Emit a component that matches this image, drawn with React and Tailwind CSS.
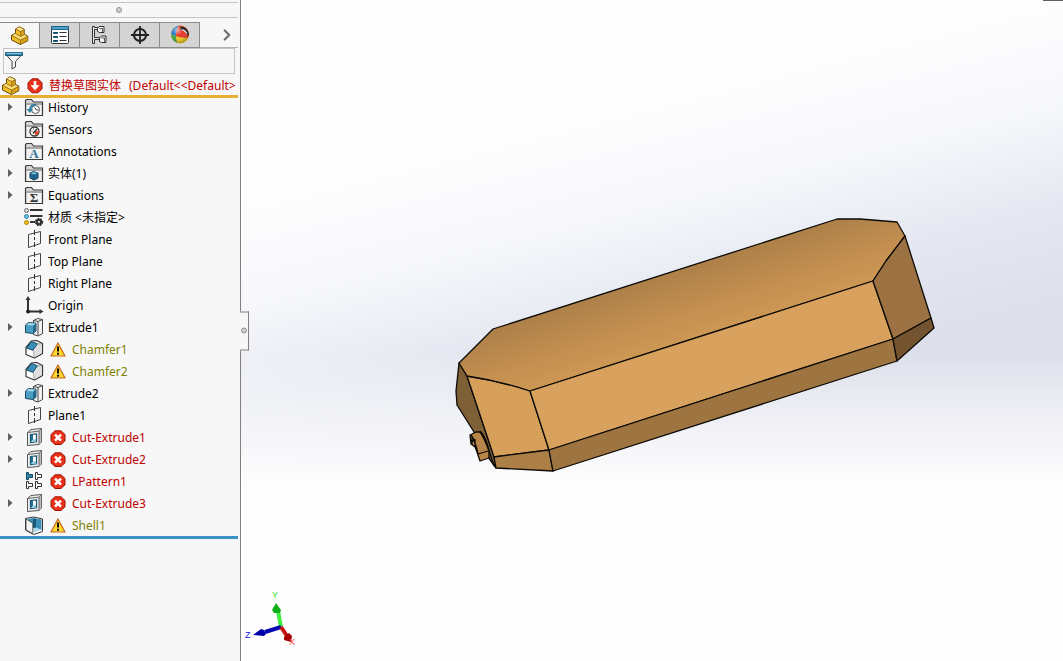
import React, { useState } from "react";
import { ChevronRight } from "lucide-react";

// ---------- Icons ----------

const Icon = ({ size = 20, children }) => (
  <svg
    width={size}
    height={size}
    viewBox={`0 0 ${size} ${size}`}
    className="shrink-0"
    aria-hidden="true"
  >
    {children}
  </svg>
);

const PartIcon = () => (
  <Icon>
    <path
      d="M5.5 3 9 .8l5.2 2.4v5l3.6 2v4.6l-7.4 3.7-8.9-4.6V9.2l4-2z"
      fill="#efbd2a"
      stroke="#6b4a08"
      strokeLinejoin="round"
    />
    <path d="M6 3.1 9 1.3l4.8 2.2-3.3 1.8z" fill="#ffe88f" />
    <path d="m2.2 9.3 3.5-1.5 4.6 2.7 3.5-1.8 3.2 1.7-6.7 3.4z" fill="#fbe07a" />
    <path d="m11 5.7 2.7-1.4v4l-2.7 1.5z" fill="#d79f18" />
    <path d="m10.8 14.3 6.500-3.200v3.500l-6.500 3.300z" fill="#d79f18" />
    <path
      d="m5.8 3.2 4.900 2.300v5L5.700 7.800M10.700 5.500l3.300-1.700M2 9.500l8.400 4.600v4.200M10.400 14.100l7.200-3.600M10.700 10.500l3.300-1.800"
      fill="none"
      stroke="#8a6210"
      strokeWidth="0.8"
    />
  </Icon>
);

const PropertyIcon = () => (
  <Icon>
    <rect x="1.5" y="1.500" width="17" height="17" rx="1" fill="#fff" stroke="#333" />
    <path d="M1 1h18v4H1z" fill="#1f6288" />
    <path d="M2 2h16v2H2z" fill="#4ba3c9" />
    <path d="M3 8h5M3 12h5M3 16h5" stroke="#246a90" strokeWidth="2" />
    <path d="M4 7.500h3M4 11.500h3M4 15.500h3" stroke="#1b3f52" />
    <path d="M9.500 7.500h7M9.500 11.500h7M9.500 15.500h7" stroke="#333" />
  </Icon>
);

const ConfigIcon = () => (
  <Icon>
    <path d="M2.500 1.500h2v1h4v2h-4v8h5v2h-5v4h-2z" fill="#e4e4e4" stroke="#333" />
    <path d="m7.500 3.500 1.500-2h5v6H9.500l-2-1z" fill="#f2f2f2" stroke="#333" />
    <path d="m9.500 13 2-2h4.500v6.500h-4.500l-2-1z" fill="#f2f2f2" stroke="#333" />
    <path d="M9.500 3.500h3v4M11.500 13h3v4" fill="none" stroke="#333" strokeWidth="0.8" />
  </Icon>
);

const DimXpertIcon = () => (
  <Icon>
    <circle cx="10" cy="10" r="6" fill="none" stroke="#222" strokeWidth="2" />
    <path d="M10 1v18M1 10h18" stroke="#222" strokeWidth="1.8" />
  </Icon>
);

const AppearanceIcon = () => (
  <Icon>
    <defs>
      <clipPath id="ball">
        <circle cx="10" cy="9.5" r="9" />
      </clipPath>
      <radialGradient id="shine" cx="0.35" cy="0.25" r="0.8">
        <stop offset="0" stopColor="#fff" stopOpacity="0.6" />
        <stop offset="0.4" stopColor="#fff" stopOpacity="0" />
        <stop offset="1" stopColor="#000" stopOpacity="0.35" />
      </radialGradient>
    </defs>
    <g clipPath="url(#ball)">
      <path d="M0 0h20v20H0z" fill="#f2cc1a" />
      <path d="M0 0h10Q6 4 6 11L0 9z" fill="#2673c9" />
      <path d="M0 9q3 2 6 2 0 5 2 9H0z" fill="#35a544" />
      <path d="M9 0h11v12q-7 2-14-1 0-7 3-11z" fill="#e8352b" />
      <path d="M10 2q6-1 9 5v4q-3-4-9-7z" fill="#222" />
      <path d="M12 4.500q3 1 5 4" fill="none" stroke="#fff" strokeWidth="1.200" />
      <circle cx="10" cy="9.500" r="9" fill="url(#shine)" />
    </g>
  </Icon>
);

const FilterIcon = () => (
  <Icon>
    <path d="M2.5 4 8 10.500v7.500l3.500-2v-5.500l6-6.500z" fill="#f3f3f3" stroke="#444" />
    <path d="M1.500 1.500h17v3h-17z" fill="#2a86b0" stroke="#1d5877" />
    <path d="M2.500 2.300h15" stroke="#9bd3ea" />
  </Icon>
);

const Folder = ({ children }) => (
  <Icon>
    <path
      d="M1.500 17.500v-15l1-1h5l2 2.500h9v13.500z"
      fill="#d6d6d6"
      stroke="#3c3c3c"
      strokeWidth="1.200"
    />
    <path d="M2 6h16" stroke="#777" />
    <path d="M3 7h14.500v10H3z" fill="#f2f2f2" />
    {children}
  </Icon>
);

const HistoryIcon = () => (
  <Folder>
    <circle cx="11.500" cy="11.500" r="4" fill="#fff" stroke="#555" />
    <path d="M10.500 9.500 12.500 12h2" fill="none" stroke="#333" />
    <path d="M12 7q-6-.5-6 5" fill="none" stroke="#2d7fa8" strokeWidth="2" />
    <path d="M2.500 11h6.500l-3 4z" fill="#2d7fa8" />
  </Folder>
);

const SensorsIcon = () => (
  <Folder>
    <circle cx="10.500" cy="11.500" r="4.500" fill="#fff" stroke="#333" strokeWidth="1.300" />
    <path d="M10.500 12 15 10.500q0 4-3.500 5z" fill="#e0442b" />
    <path d="m9 13.500 4-4.500" stroke="#222" strokeWidth="1.400" />
    <path d="M7.500 11h1M9.500 8.500v1" stroke="#333" />
  </Folder>
);

const AnnotationsIcon = () => (
  <Folder>
    <text
      x="10"
      y="16"
      textAnchor="middle"
      fontSize="13"
      fontWeight="bold"
      fill="#2a6f96"
      className="font-['Liberation_Serif',serif]"
    >
      A
    </text>
  </Folder>
);

const BodiesIcon = () => (
  <Folder>
    <path d="m6 9 3.500-1.500L14 9v5l-4 2-4-2z" fill="#1e6d94" stroke="#113f57" />
    <path d="m6.500 9.200 3.300-1.300 3.600 1.200-3.400 1.500z" fill="#7cc0dc" />
    <path d="M10 10.500V16" stroke="#113f57" strokeWidth="0.8" />
  </Folder>
);

const EquationsIcon = () => (
  <Folder>
    <text
      x="10"
      y="16"
      textAnchor="middle"
      fontSize="13"
      fontWeight="bold"
      fill="#333"
      className="font-['Liberation_Serif',serif]"
    >
      Σ
    </text>
  </Folder>
);

const MaterialIcon = () => (
  <Icon>
    <circle cx="2.500" cy="2.500" r="2" fill="#ddd" stroke="#666" />
    <circle cx="2.500" cy="8.500" r="2" fill="#6cc1e6" stroke="#2d7fa8" />
    <circle cx="2.500" cy="14.500" r="2" fill="#f4c20d" stroke="#a57f00" />
    <path d="M6 2h12.500M6 8h12.500M6 14h5" stroke="#333" strokeWidth="2" />
    <circle cx="15" cy="14" r="2.300" fill="none" stroke="#333" strokeWidth="2.400" />
    <circle
      cx="15"
      cy="14"
      r="3.600"
      fill="none"
      stroke="#333"
      strokeWidth="1.200"
      strokeDasharray="1.500"
    />
  </Icon>
);

const PlaneIcon = () => (
  <Icon>
    <path d="M4.500 4.500 16.500 1.500v12l-12 4z" fill="none" stroke="#444" />
    <path d="M10.500 0v19" stroke="#333" strokeDasharray="5 2 3 2" />
  </Icon>
);

const OriginIcon = () => (
  <Icon>
    <path d="M4 2v13.500h13" fill="none" stroke="#333" strokeWidth="2" />
    <path d="m4 0 2.500 4h-5zM19.500 15.500l-4 2.500v-5z" fill="#333" />
    <circle cx="4" cy="15.500" r="2" fill="#222" />
  </Icon>
);

const ExtrudeIcon = () => (
  <Icon>
    <path d="m9.500 2.500 4-2 5 1v14L14 18l-4.500-1.500z" fill="#f2f2f2" stroke="#444" />
    <path d="M14 3.500v14M9.500 2.500l4.500 1 4.500-2" fill="none" stroke="#444" />
    <path
      d="m1.500 7 3-2.500 7.500.7v7.800l-3 2.500-7.500-1z"
      fill="#4c9fc4"
      stroke="#174a63"
      strokeLinejoin="round"
    />
    <path d="m2.300 6.800 2.500-1.800 6.500.6-2.300 2z" fill="#a9d8ea" />
    <path d="M9 8v7l2.500-2.200V6z" fill="#236b8e" />
  </Icon>
);

const ChamferIcon = () => (
  <Icon>
    <path
      d="M2 7.500 7.500 1l5-.5 6 3v10L10.500 18 2 14.500z"
      fill="#fff"
      stroke="#333"
      strokeLinejoin="round"
      strokeWidth="1.200"
    />
    <path d="m2.500 8 5-6.500 6 2.300L9 10.300z" fill="#3a8fb7" stroke="#174a63" />
    <path d="m10 10.800 4-6.300 3.800-.4v9L10.800 17z" fill="#dedede" />
    <path d="M9.500 10.500 10.300 17.500M13.500 4l4.500-.3" stroke="#888" strokeWidth="0.8" />
  </Icon>
);

const CutIcon = () => (
  <Icon>
    <path
      d="M3.500 4.500 7 1.500 17.500.5v13.500L15 16.500l-11.500 1z"
      fill="#ececec"
      stroke="#555"
      strokeLinejoin="round"
    />
    <path d="m15 3.200 2.200-2.200v12.800L15 16z" fill="#bdbdbd" />
    <path d="m3.500 4.500 11.500-1.300v13.300M15 3.200l2.500-2.500" fill="none" stroke="#666" />
    <path d="m6.500 6.500 6-.7v8l-6 .8z" fill="#fff" stroke="#1c5876" strokeWidth="1.200" />
    <path d="M7 7 9 6.800v4.700l-2 2.300z" fill="#1e6d94" />
    <path d="m9 11.500 3-.3v2.300l-4.700.5z" fill="#8cc7df" />
  </Icon>
);

const PatternIcon = () => (
  <Icon>
    <path d="M2.500.5h2v2h4v3h-4v2h-2z" fill="#2f86ad" stroke="#174a63" />
    <path
      d="M11.500.5h2v2h4v3h-4v2h-2zM2.500 9.500h2v2h4v3h-4v2h-2zM11.500 9.500h2v2h4v3h-4v2h-2z"
      fill="#fff"
      stroke="#333"
    />
  </Icon>
);

const ShellIcon = () => (
  <Icon>
    <path
      d="m1.500 2.500 8-1.500 9 2v12.500l-9 3-8-4.500z"
      fill="#fafafa"
      stroke="#333"
      strokeLinejoin="round"
    />
    <path d="m3.500 3 6-1 8 1.500v10.500l-8.500-2z" fill="#3a8fb7" />
    <path d="m9 2.500 3 .5v8.500l-3 1z" fill="#1a5b7c" />
    <path d="m8.800 12.500 3-1 5.700 2.300-7.500 2.500z" fill="#a9d8ea" />
    <path d="M2 3l6.800 4.200v10.300L2 13.800z" fill="#f2f2f2" stroke="#444" strokeWidth="0.8" />
  </Icon>
);

const WarningIcon = () => (
  <Icon size={16}>
    <path
      d="M8 1 15 14H1z"
      fill="#ffd92e"
      stroke="#c6661c"
      strokeLinejoin="round"
      strokeWidth="1.200"
    />
    <path d="M8 4.500v5M8 10.800v2" stroke="#111" strokeWidth="2" />
  </Icon>
);

const ErrorIcon = () => (
  <Icon size={16}>
    <path
      d="M5 .8h6L15 4.500v6.300L11 14.500H5L1 10.800V4.500z"
      fill="#e8321a"
      stroke="#a01206"
      strokeLinejoin="round"
    />
    <path d="m5 4.700 6 6m0-6-6 6" stroke="#fff" strokeWidth="2.600" />
  </Icon>
);

const RebuildIcon = () => (
  <Icon size={16}>
    <path
      d="M5 .8h6L15 4.800v6L11 14.800H5L1 10.800v-6z"
      fill="#e8321a"
      stroke="#a01206"
      strokeLinejoin="round"
    />
    <path d="M8 3v5" stroke="#fff" strokeWidth="2.600" />
    <path d="M3.500 7.300h9L8 12.300z" fill="#fff" />
  </Icon>
);

// ---------- Data ----------

const tabs = [
  { label: "FeatureManager", icon: PartIcon },
  { label: "PropertyManager", icon: PropertyIcon },
  { label: "ConfigurationManager", icon: ConfigIcon },
  { label: "DimXpertManager", icon: DimXpertIcon },
  { label: "DisplayManager", icon: AppearanceIcon },
];

const features = [
  { name: "History", icon: HistoryIcon, expandable: true },
  { name: "Sensors", icon: SensorsIcon },
  { name: "Annotations", icon: AnnotationsIcon, expandable: true },
  { name: "实体(1)", icon: BodiesIcon, expandable: true },
  { name: "Equations", icon: EquationsIcon, expandable: true },
  { name: "材质 <未指定>", icon: MaterialIcon },
  { name: "Front Plane", icon: PlaneIcon },
  { name: "Top Plane", icon: PlaneIcon },
  { name: "Right Plane", icon: PlaneIcon },
  { name: "Origin", icon: OriginIcon },
  { name: "Extrude1", icon: ExtrudeIcon, expandable: true },
  { name: "Chamfer1", icon: ChamferIcon, status: "warning" },
  { name: "Chamfer2", icon: ChamferIcon, status: "warning" },
  { name: "Extrude2", icon: ExtrudeIcon, expandable: true },
  { name: "Plane1", icon: PlaneIcon },
  { name: "Cut-Extrude1", icon: CutIcon, status: "error", expandable: true },
  { name: "Cut-Extrude2", icon: CutIcon, status: "error", expandable: true },
  { name: "LPattern1", icon: PatternIcon, status: "error" },
  { name: "Cut-Extrude3", icon: CutIcon, status: "error", expandable: true },
  { name: "Shell1", icon: ShellIcon, status: "warning" },
];

const getTextColor = (status) => {
  if (status === "error") return "text-[#c00000]";
  if (status === "warning") return "text-[#808000]";
  return "text-black";
};

// ---------- Feature tree ----------

const FeatureRow = ({ feature }) => {
  const FeatureIcon = feature.icon;
  return (
    <li className="flex h-[22px] items-center">
      <span className="flex w-6 shrink-0 pl-2">
        {feature.expandable && (
          <button type="button" aria-label={`Expand ${feature.name}`} className="pb-0.5">
            <svg width="5" height="8" viewBox="0 0 5 8">
              <path d="M0 0v8l4.500-4z" fill="#606060" />
            </svg>
          </button>
        )}
      </span>
      <FeatureIcon />
      {feature.status && (
        <span className="ml-1.5 mr-0.5">
          {feature.status === "error" ? <ErrorIcon /> : <WarningIcon />}
        </span>
      )}
      <span className={`ml-1 truncate ${getTextColor(feature.status)}`}>
        {feature.name}
      </span>
    </li>
  );
};

const Sidebar = () => {
  const [active, setActive] = useState(0);

  return (
    <aside className="w-[241px] shrink-0 border-r border-[#808080] bg-[#f7f7f7] pr-0.5">
      <div className="h-[3px] border-b border-[#c4c4c4]" />
      <div className="flex h-[15px] items-center justify-center border-b border-[#c4c4c4]">
        <span className="size-1.5 rounded-full border border-[#909090] bg-[#d0d0d0]" />
      </div>

      {/* Manager tabs */}
      <div role="tablist" className="mt-1 flex h-[26px]">
        {tabs.map((tab, index) => (
          <button
            key={tab.label}
            type="button"
            role="tab"
            aria-label={tab.label}
            aria-selected={active === index}
            onClick={() => setActive(index)}
            className={`flex w-10 items-center justify-center border-r border-t border-[#8c8c8c] ${
              active === index ? "bg-[#f7f7f7]" : "border-b bg-[#d4d4d4]"
            }`}
          >
            <tab.icon />
          </button>
        ))}
        <button
          type="button"
          aria-label="More tabs"
          className="flex flex-1 items-center justify-end border-b border-[#b4b4b4] pr-0.5 text-[#707070]"
        >
          <ChevronRight size={18} strokeWidth={3} />
        </button>
      </div>

      {/* Filter box */}
      <label className="mx-[3px] flex h-[26px] items-center border border-[#c4c4c4]">
        <FilterIcon />
        <input
          type="text"
          aria-label="Filter"
          className="h-full min-w-0 flex-1 bg-transparent px-1 outline-none"
        />
      </label>

      {/* Root part */}
      <div className="flex h-[21px] items-center gap-1.5 overflow-hidden whitespace-nowrap pl-px pt-0.5 text-[#c00000]">
        <PartIcon />
        <RebuildIcon />
        <span className="flex gap-2">
          <span>替换草图实体</span>
          <span>(Default&lt;&lt;Default&gt;</span>
        </span>
      </div>
      <div className="h-[3px] bg-[#e6b035]" />

      <ul className="-mt-px">
        {features.map((feature) => (
          <FeatureRow key={feature.name} feature={feature} />
        ))}
      </ul>
      <div className="-mt-px h-[3px] bg-[#3a8fc4]" />
    </aside>
  );
};

// ---------- Graphics area ----------

const Scene = () => (
  <svg
    viewBox="241 0 822 661"
    className="absolute inset-0 h-full w-full"
    role="img"
    aria-label="Part model"
  >
    <defs>
      <linearGradient
        id="topFace"
        gradientUnits="userSpaceOnUse"
        x1="660"
        y1="275"
        x2="687"
        y2="359"
      >
        <stop offset="0" stopColor="#ad8049" />
        <stop offset="0.5" stopColor="#c48f50" />
        <stop offset="0.8" stopColor="#cd9854" />
      </linearGradient>
    </defs>

    <g stroke="#0c0a06" strokeWidth="1.3" strokeLinejoin="round">
      {/* left end */}
      <path d="M459 363 467 376 494 457 496 468 488 457 474 432 457 405 456 391z" fill="#7f5f36" />
      <path d="M467 376Q500 381 530 391L549 450 494 457z" fill="#d69f5a" />
      <path d="M494 457 549 450 553 471 496 468z" fill="#ab7f46" />
      {/* long faces */}
      <path
        d="M493 329 837 219 860 219 897 222 905 236 886 261 873 281 530 391Q500 381 467 376L459 363z"
        fill="url(#topFace)"
      />
      <path d="M530 391 873 281 893 339 549 450z" fill="#d8a15e" />
      <path d="M549 450 893 339 897 361 553 471z" fill="#9e7541" />
      {/* right end */}
      <path d="M873 281 886 261 905 236 931 318 893 339z" fill="#9c7242" />
      <path d="M893 339 931 318 934 328 897 361z" fill="#745430" />
      {/* lug */}
      <path
        d="M470 435 476 432 481 432Q487 440 489 451L489 458 480 461 477 452 475 447 471 444z"
        fill="#b98649"
      />
      <path d="M471 435Q475 440 478 454L488 451M472 437v8M475 439v8M470 441h5" fill="none" />
      <path d="M480 432Q486 440 494 466" fill="none" />
    </g>
  </svg>
);

const Triad = () => (
  <svg
    width="60"
    height="72"
    viewBox="0 0 60 72"
    className="absolute bottom-0 left-0"
    role="img"
    aria-label="View orientation"
  >
    <path d="M40 38 37 22" stroke="#3cf03c" strokeWidth="4" />
    <path d="m35 14 5 7-1 3h-6l-2-3z" fill="#0fae1a" />
    <path d="M40 38 24 43" stroke="#0808b0" strokeWidth="4" />
    <path d="m12 46 8-6 3 1 2 4-2 2z" fill="#0000a8" />
    <path d="m40 38 6 9" stroke="#c81010" strokeWidth="4" />
    <path d="m50 53-7-2v-3l5-4 3 3z" fill="#a80000" />
    <g fontSize="9" className="font-['Liberation_Sans',sans-serif]">
      <text x="31" y="9" fill="#2ee02e">
        Y
      </text>
      <text x="4" y="49" fill="#2020e0">
        Z
      </text>
      <text x="48" y="56" fill="#f04848">
        X
      </text>
    </g>
  </svg>
);

const Viewport = () => (
  <main className="relative min-w-0 flex-1 bg-[linear-gradient(180deg,#fefefe00_53%,#fefefe80_62%,#fefefe_74%),linear-gradient(166deg,#fefefe_22%,#f6f7fb_36%,#e5e8f1_47%,#dcdeea_60%)]">
    <Scene />
    <Triad />
    <div className="absolute right-0 top-0 h-px w-5 bg-[#606060]" />
    <button
      type="button"
      aria-label="Collapse panel"
      className="absolute -left-px top-1/2 flex h-[39px] w-[9px] -translate-y-1/2 items-center justify-center border-y border-r border-[#808080] bg-[#f7f7f7]"
    >
      <span className="size-1.5 shrink-0 rounded-full border border-[#909090] bg-[#d0d0d0]" />
    </button>
  </main>
);

const App = () => {
  return (
    <div className="flex min-h-screen font-['Noto_Sans','Noto_Sans_CJK_SC',sans-serif] text-xs">
      <Sidebar />
      <Viewport />
    </div>
  );
};

export default App;
